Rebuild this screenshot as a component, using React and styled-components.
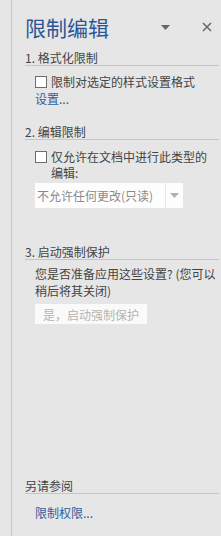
import styled, { createGlobalStyle } from "styled-components";

const Global = createGlobalStyle`
  html, body {
    margin: 0;
    padding: 0;
    background: #e6e6e6;
  }
  body {
    font-family: "Noto Sans CJK SC", "Liberation Sans", sans-serif;
  }
`;

const Pane = styled.div`
  box-sizing: border-box;
  height: 536px;
  width: 210px;
  margin-left: 11px;
  border-left: 1px solid #c8c8c8;
  padding: 12px 2px 15px 13px;
  display: flex;
  flex-direction: column;
  color: #444;
  font-size: 12px;
`;

const Head = styled.div`
  display: flex;
  align-items: center;
  height: 30px;
`;

const Title = styled.h1`
  flex: 1;
  margin: 0;
  font-size: 21px;
  font-weight: normal;
  line-height: 30px;
  color: #2b5797;
`;

const IconBtn = styled.span`
  display: flex;
  align-items: center;
  justify-content: center;
  width: 24px;
  height: 20px;
  margin-right: ${(p) => p.$gap || 0}px;
`;

const Section = styled.div`
  margin-top: ${(p) => p.$top}px;
`;

const SectionTitle = styled.div`
  line-height: 14px;
  border-bottom: 1px solid #c6c6c6;
  color: #444;
`;

const Body = styled.div`
  padding-left: 10px;
  display: flex;
  flex-direction: column;
  align-items: flex-start;
`;

const CheckRow = styled.label`
  display: flex;
  align-items: flex-start;
  gap: 4px;
  margin-top: ${(p) => p.$top}px;
  line-height: 16px;
`;

const Box = styled.span`
  flex: none;
  box-sizing: border-box;
  width: 12px;
  height: 12px;
  margin-top: 2px;
  border: 1px solid #6d6d6d;
  background: #fff;
`;

const Link = styled.a`
  color: #2e5f9e;
  line-height: 16px;
  margin-top: ${(p) => p.$top || 0}px;
  text-decoration: none;
  cursor: pointer;
`;

const Select = styled.div`
  display: flex;
  box-sizing: border-box;
  width: 148px;
  height: 25px;
  margin-top: 2px;
  background: #fdfdfd;
`;

const SelectText = styled.span`
  flex: 1;
  line-height: 25px;
  padding-left: 2px;
  color: #8a8a8a;
  border-right: 1px solid #e6e6e6;
`;

const SelectArrow = styled.span`
  width: 17px;
  display: flex;
  align-items: center;
  justify-content: center;
`;

const Text = styled.p`
  margin: 5px 0 0;
  line-height: 17px;
  color: #444;
`;

const Button = styled.button`
  margin-top: 5px;
  width: 112px;
  height: 20px;
  border: none;
  background: #fafafa;
  color: #b4b4b4;
  font: inherit;
  font-size: 12px;
  padding: 0;
`;

const Footer = styled.div`
  margin-top: auto;
`;

const Caret = ({ color = "#666" }) => (
  <svg width="9" height="5" viewBox="0 0 9 5">
    <path d="M0 0h9L4.5 5z" fill={color} />
  </svg>
);

export default function App() {
  return (
    <>
      <Global />
      <Pane>
        <Head>
          <Title>限制编辑</Title>
          <IconBtn $gap={18}>
            <Caret />
          </IconBtn>
          <IconBtn>
            <svg width="10" height="10" viewBox="0 0 10 10">
              <path d="M1 1l8 8M9 1l-8 8" stroke="#6a6a6a" strokeWidth="1.6" />
            </svg>
          </IconBtn>
        </Head>

        <Section $top={9}>
          <SectionTitle>1. 格式化限制</SectionTitle>
          <Body>
            <CheckRow $top={8}>
              <Box />
              <span>限制对选定的样式设置格式</span>
            </CheckRow>
            <Link $top={1}>设置...</Link>
          </Body>
        </Section>

        <Section $top={18}>
          <SectionTitle>2. 编辑限制</SectionTitle>
          <Body>
            <CheckRow $top={9}>
              <Box />
              <span>
                仅允许在文档中进行此类型的
                <br />
                编辑:
              </span>
            </CheckRow>
            <Select>
              <SelectText>不允许任何更改(只读)</SelectText>
              <SelectArrow>
                <Caret color="#b0b0b0" />
              </SelectArrow>
            </Select>
          </Body>
        </Section>

        <Section $top={37}>
          <SectionTitle>3. 启动强制保护</SectionTitle>
          <Body>
            <Text>
              您是否准备应用这些设置? (您可以
              <br />
              稍后将其关闭)
            </Text>
            <Button>是，启动强制保护</Button>
          </Body>
        </Section>

        <Footer>
          <SectionTitle>另请参阅</SectionTitle>
          <Body>
            <Link $top={11}>限制权限...</Link>
          </Body>
        </Footer>
      </Pane>
    </>
  );
}
